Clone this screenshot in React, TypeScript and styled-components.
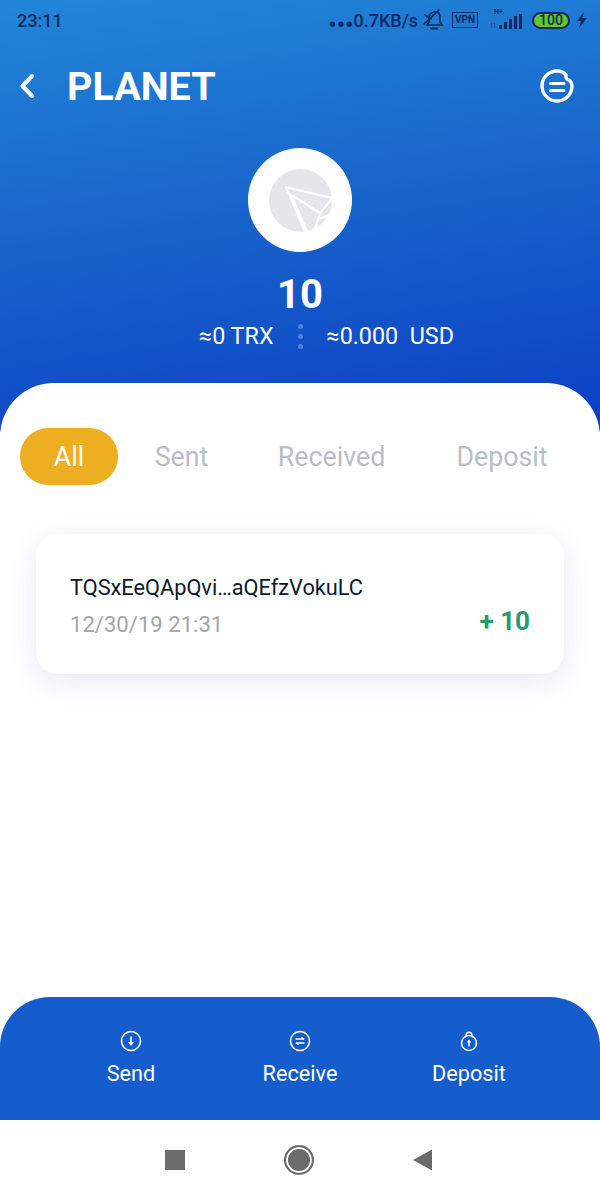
import React from "react";
import styled, { createGlobalStyle } from "styled-components";

const GlobalStyle = createGlobalStyle`
  html, body {
    margin: 0;
    padding: 0;
    background: #ffffff;
  }
  body {
    font-family: Roboto, "Liberation Sans", sans-serif;
  }
`;

const Screen = styled.div`
  width: 600px;
  height: 1200px;
  display: flex;
  flex-direction: column;
  overflow: hidden;
  background: #ffffff;
`;

const Hero = styled.header`
  height: 432px;
  flex: none;
  display: flex;
  flex-direction: column;
  background: linear-gradient(172deg, #2186d8 0%, #1a69cc 40%, #0c3fc4 100%);
`;

const StatusBar = styled.div`
  height: 40px;
  padding: 0 13px 0 17px;
  display: flex;
  align-items: center;
  color: #0e2a5e;
`;

const Time = styled.span`
  font-size: 18px;
  font-weight: 500;
  flex: 1;
`;

const Speed = styled.span`
  font-size: 18px;
  font-weight: 500;
`;

const SpeedDots = styled.span`
  font-size: 24px;
  line-height: 0;
  vertical-align: -6px;
`;

const StatusIcons = styled.div`
  display: flex;
  align-items: center;
`;

const TitleRow = styled.div`
  height: 54px;
  margin-top: 20px;
  padding: 0 25px 0 19px;
  display: flex;
  align-items: center;
  svg {
    margin-bottom: 3px;
  }
`;

const Title = styled.h1`
  flex: 1;
  margin: 0 0 0 32px;
  color: #ffffff;
  font-size: 39.5px;
  font-weight: 700;
  line-height: 54px;
`;

const Balance = styled.div`
  margin-top: 34px;
  display: flex;
  flex-direction: column;
  align-items: center;
  color: #ffffff;
`;

const Avatar = styled.div`
  width: 104px;
  height: 104px;
  border-radius: 50%;
  background: #ffffff;
  display: flex;
  align-items: center;
  justify-content: center;
`;

const Amount = styled.div`
  margin-top: 19px;
  font-size: 40px;
  line-height: 48px;
  font-weight: 700;
`;

const Rates = styled.div`
  margin-top: 2px;
  width: 100%;
  display: grid;
  grid-template-columns: 1fr auto 1fr;
  align-items: center;
  font-size: 23.3px;
  line-height: 30px;
  span:first-child {
    justify-self: end;
  }
`;

const RateDots = styled.div`
  display: flex;
  flex-direction: column;
  gap: 5px;
  margin: 0 24px;
  i {
    width: 5px;
    height: 5px;
    border-radius: 50%;
    background: #4f83e2;
  }
`;

const Sheet = styled.main`
  flex: 1;
  margin-top: -49px;
  padding: 45px 20px 0;
  background: #ffffff;
  border-radius: 54px 54px 0 0;
  position: relative;
`;

const Tabs = styled.div`
  display: flex;
  align-items: center;
`;

const Tab = styled.div<{ $active?: boolean; $width: number }>`
  flex: none;
  width: ${(p) => p.$width}px;
  height: 57px;
  display: flex;
  align-items: center;
  justify-content: center;
  border-radius: 29px;
  font-size: 26.8px;
  color: ${(p) => (p.$active ? "#ffffff" : "#b9bdc4")};
  background: ${(p) => (p.$active ? "#eeae22" : "transparent")};
`;

const Card = styled.section`
  margin: 49px 16px 0;
  height: 140px;
  padding: 0 34px;
  box-sizing: border-box;
  display: flex;
  align-items: center;
  justify-content: space-between;
  background: #ffffff;
  border-radius: 22px;
  box-shadow: 0 8px 30px rgba(80, 100, 170, 0.14);
`;

const CardText = styled.div`
  display: flex;
  flex-direction: column;
  gap: 8px;
  margin-top: 3px;
`;

const Address = styled.div`
  font-size: 21.75px;
  line-height: 28px;
  color: #0d1a2b;
`;

const DateText = styled.div`
  font-size: 22.1px;
  line-height: 28px;
  color: #a3a5a9;
`;

const Delta = styled.div`
  margin-top: 33px;
  font-size: 26px;
  font-weight: 700;
  color: #2a9a6c;
`;

const ActionBar = styled.nav`
  height: 123px;
  flex: none;
  box-sizing: border-box;
  padding-top: 33px;
  background: #155ccc;
  border-radius: 50px 50px 0 0;
  display: grid;
  grid-template-columns: 169px 169px 169px;
  justify-content: center;
`;

const Action = styled.div`
  display: flex;
  flex-direction: column;
  align-items: center;
  color: #ffffff;
  font-size: 21.7px;
  line-height: 28px;
  gap: 8px;
`;

const NavBar = styled.footer`
  height: 80px;
  flex: none;
  box-sizing: border-box;
  padding-left: 165px;
  background: #ffffff;
  display: flex;
  align-items: center;
  gap: 99px;
`;

const NavSquare = styled.div`
  width: 20px;
  height: 20px;
  background: #6b6b6b;
`;

const NavCircle = styled.div`
  width: 30px;
  height: 30px;
  box-sizing: border-box;
  border-radius: 50%;
  background: #6b6b6b;
  border: 2px solid #6b6b6b;
  box-shadow: inset 0 0 0 2px #ffffff;
`;

const VpnBadge = styled.span`
  margin-left: 8px;
  width: 26px;
  height: 16px;
  box-sizing: border-box;
  border: 1.5px solid #0e2a5e;
  font-size: 10px;
  font-weight: 700;
  line-height: 13px;
  text-align: center;
  color: #0e2a5e;
`;

const Battery = styled.span`
  margin-left: 8px;
  width: 38px;
  height: 17px;
  box-sizing: border-box;
  border: 2px solid #0e2a5e;
  border-radius: 9px;
  background: #68c42c;
  color: #0e2a5e;
  font-size: 14px;
  font-weight: 500;
  line-height: 13px;
  text-align: center;
`;

function PlaneLogo() {
  return (
    <svg width="63" height="63" viewBox="0 0 63 63">
      <circle cx="31.5" cy="31.5" r="31.5" fill="#e4e6e9" />
      <path d="M16 18 L35 63 L39 62 L24 27 Z" fill="#ffffff" />
      <path d="M16 18 L63 29 M24 27 L51 44 L63 30 M51 44 L46 60 M50 50 L60 46" fill="none" stroke="#ffffff" strokeWidth="2.2" />
    </svg>
  );
}

function BackIcon() {
  return (
    <svg width="16" height="26" viewBox="0 0 16 26">
      <path d="M13 3 L3.5 13 L13 23" fill="none" stroke="#fff" strokeWidth="4" strokeLinecap="round" strokeLinejoin="round" />
    </svg>
  );
}

function MenuIcon() {
  return (
    <svg width="36" height="36" viewBox="0 0 36 36">
      <path
        d="M33 18 A15 15 0 1 1 18 3 C22 3 25 4.5 27 7 C26.5 9.5 27.5 11.5 30 12 C32 13.5 33 15.5 33 18 Z"
        fill="none"
        stroke="#fff"
        strokeWidth="3.4"
      />
      <path d="M11.5 15.5 H25 M11.5 22.5 H25" stroke="#fff" strokeWidth="3" strokeLinecap="round" />
    </svg>
  );
}

function BellOffIcon() {
  return (
    <svg width="22" height="22" viewBox="0 0 22 22" fill="none" stroke="#0e2a5e" strokeWidth="1.7" style={{ marginLeft: 4 }}>
      <path d="M5 16 L7 13 V8 C7 5 10 3 13 3 C16 3 18 5 18 8 V13 L20 16 Z" />
      <path d="M9 19.5 H15" strokeWidth="2" strokeLinecap="round" />
      <path d="M2 15 L17 1 M3 6 L9 10" strokeLinecap="round" />
    </svg>
  );
}

function SignalIcon() {
  return (
    <svg width="34" height="24" viewBox="0 0 34 24" fill="#0e2a5e" style={{ marginLeft: 12, marginTop: -2 }}>
      <text x="4" y="7" fontSize="7" fontWeight="700" fontFamily="Roboto">H+</text>
      <rect x="1" y="16" width="1" height="5" opacity="0.5" />
      <rect x="4" y="16" width="1" height="5" opacity="0.5" />
      <rect x="9" y="18" width="3" height="4" />
      <rect x="14" y="15" width="3" height="7" />
      <rect x="19" y="12" width="3" height="10" />
      <rect x="24" y="9" width="3" height="13" />
      <rect x="29" y="7" width="3" height="15" />
    </svg>
  );
}

function BoltIcon() {
  return (
    <svg width="10" height="16" viewBox="0 0 10 16" fill="#0e2a5e" style={{ marginLeft: 7 }}>
      <path d="M7 0 L0 9 H4 L2 16 L10 6 H5.5 Z" />
    </svg>
  );
}

function SendIcon() {
  return (
    <svg width="22" height="22" viewBox="0 0 22 22" fill="none" stroke="#fff">
      <circle cx="11" cy="11" r="9.5" strokeWidth="1.6" />
      <path d="M11 6.5 V14.5" strokeWidth="1.6" />
      <path d="M8 12 H14 L11 16 Z" fill="#fff" strokeWidth="0" />
    </svg>
  );
}

function ReceiveIcon() {
  return (
    <svg width="22" height="22" viewBox="0 0 22 22" fill="none" stroke="#fff">
      <circle cx="11" cy="11" r="9.5" strokeWidth="1.6" />
      <path d="M6.5 9 H15 M7 13 H15.5" strokeWidth="1.4" />
      <path d="M12.5 6.5 L16 9 H12.5 Z M9.5 15.5 L6 13 H9.5 Z" fill="#fff" strokeWidth="0" />
    </svg>
  );
}

function DepositIcon() {
  return (
    <svg width="22" height="22" viewBox="0 0 22 22" fill="none" stroke="#fff">
      <circle cx="11" cy="13" r="7.5" strokeWidth="1.6" />
      <path d="M8 6 C8 1 14 1 14 6" strokeWidth="1.6" />
      <path d="M11 11.5 V16.5" strokeWidth="1.5" />
      <path d="M8.8 12.5 L11 9.5 L13.2 12.5 Z" fill="#fff" strokeWidth="0" />
    </svg>
  );
}

function NavBackIcon() {
  return (
    <svg width="19" height="22" viewBox="0 0 19 22">
      <path d="M19 0.5 V21.5 L0 11 Z" fill="#6b6b6b" />
    </svg>
  );
}

export default function App() {
  return (
    <Screen>
      <GlobalStyle />
      <Hero>
        <StatusBar>
          <Time>23:11</Time>
          <StatusIcons>
            <Speed>
              <SpeedDots>•••</SpeedDots>0.7KB/s
            </Speed>
            <BellOffIcon />
            <VpnBadge>VPN</VpnBadge>
            <SignalIcon />
            <Battery>100</Battery>
            <BoltIcon />
          </StatusIcons>
        </StatusBar>
        <TitleRow>
          <BackIcon />
          <Title>PLANET</Title>
          <MenuIcon />
        </TitleRow>
        <Balance>
          <Avatar>
            <PlaneLogo />
          </Avatar>
          <Amount>10</Amount>
          <Rates>
            <span>≈0 TRX</span>
            <RateDots>
              <i />
              <i />
              <i />
            </RateDots>
            <span>≈0.000&nbsp; USD</span>
          </Rates>
        </Balance>
      </Hero>
      <Sheet>
        <Tabs>
          <Tab $active $width={98}>All</Tab>
          <Tab $width={127}>Sent</Tab>
          <Tab $width={173}>Received</Tab>
          <Tab $width={168}>Deposit</Tab>
        </Tabs>
        <Card>
          <CardText>
            <Address>TQSxEeQApQvi…aQEfzVokuLC</Address>
            <DateText>12/30/19 21:31</DateText>
          </CardText>
          <Delta>+ 10</Delta>
        </Card>
      </Sheet>
      <ActionBar>
        <Action>
          <SendIcon />
          Send
        </Action>
        <Action>
          <ReceiveIcon />
          Receive
        </Action>
        <Action>
          <DepositIcon />
          Deposit
        </Action>
      </ActionBar>
      <NavBar>
        <NavSquare />
        <NavCircle />
        <NavBackIcon />
      </NavBar>
    </Screen>
  );
}
